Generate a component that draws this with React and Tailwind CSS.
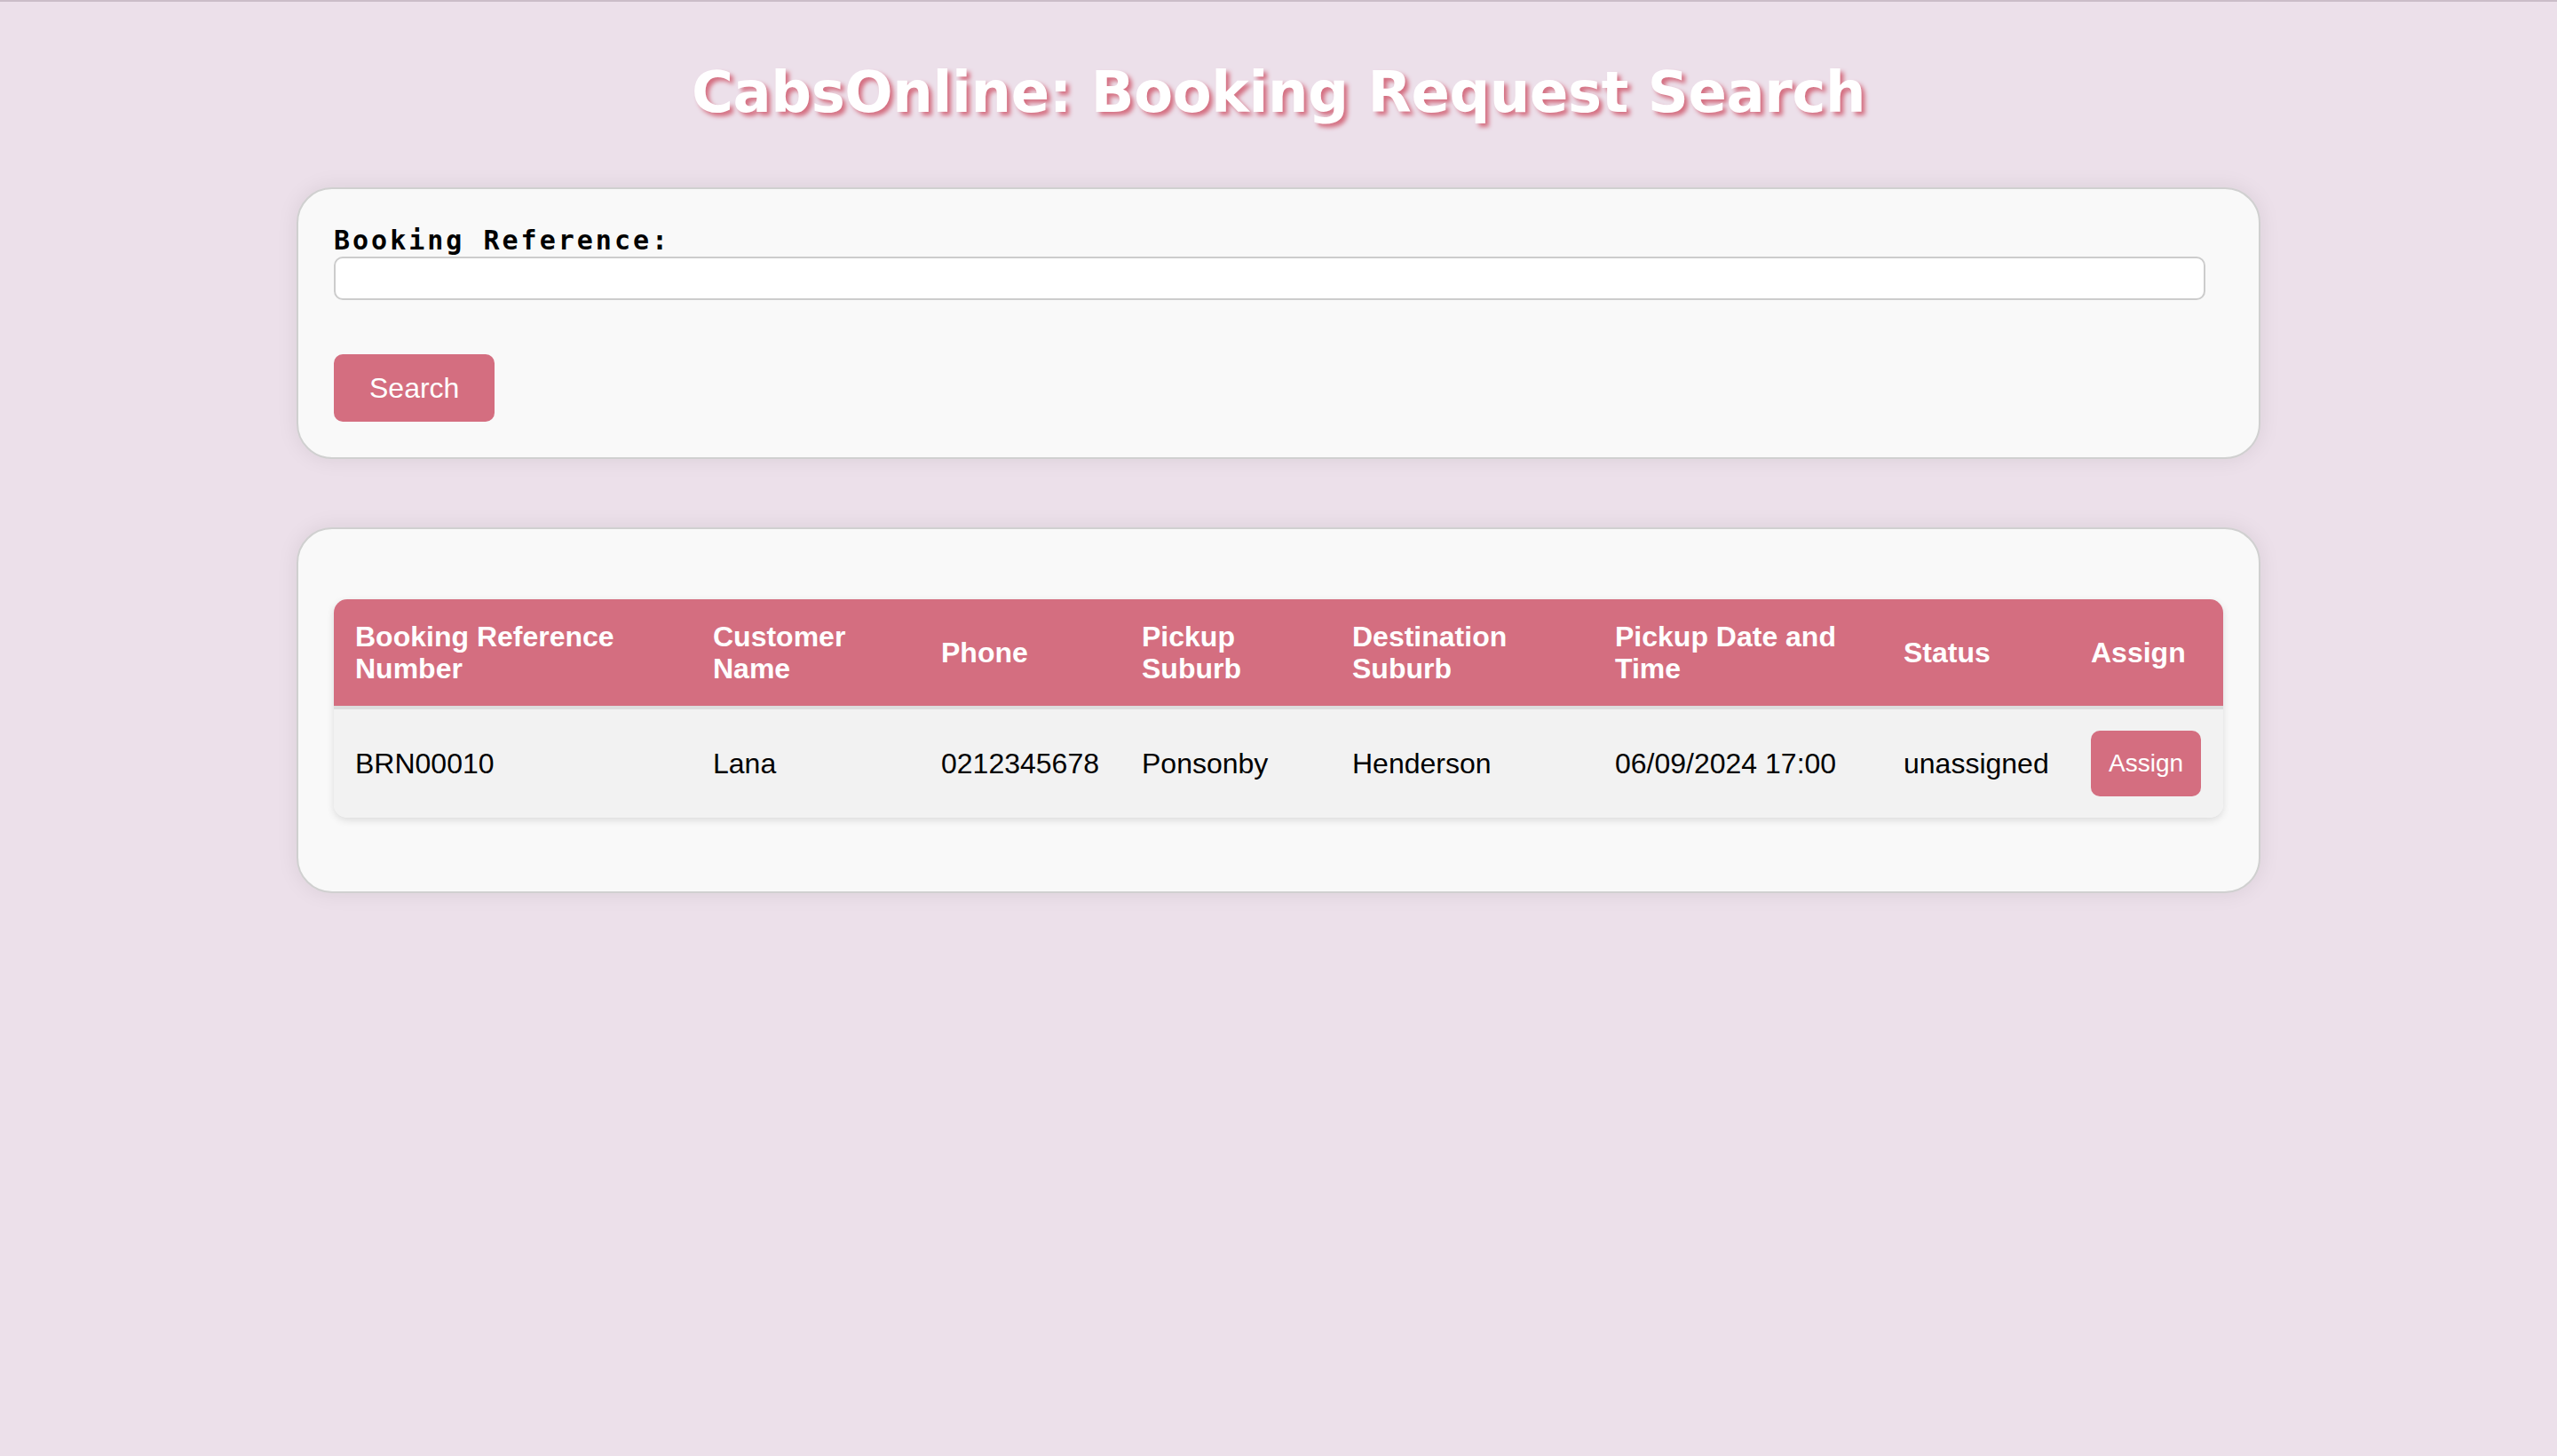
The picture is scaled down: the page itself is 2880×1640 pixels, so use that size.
export default function App() {
  const cols = [
    { w: "w-[403px]", label: "Booking Reference Number" },
    { w: "w-[257px]", label: "Customer Name" },
    { w: "w-[226px]", label: "Phone" },
    { w: "w-[237px]", label: "Pickup Suburb" },
    { w: "w-[296px]", label: "Destination Suburb" },
    { w: "w-[325px]", label: "Pickup Date and Time" },
    { w: "w-[211px]", label: "Status" },
    { w: "w-[173px]", label: "Assign" },
  ];
  const row = ["BRN00010", "Lana", "0212345678", "Ponsonby", "Henderson", "06/09/2024 17:00", "unassigned"];
  return (
    <div className="min-h-[1640px] w-full bg-[#ece0ea] border-t-2 border-[#cbbdc8] pt-[64px] font-['Liberation_Sans',Arial,sans-serif]">
      <h1 className="text-center text-white font-bold text-[64px] leading-[77px] tracking-[-0.4px] font-['DejaVu_Sans',Verdana,sans-serif] [text-shadow:4px_4px_5px_#d46e80]">
        CabsOnline: Booking Request Search
      </h1>

      <div className="w-[2212px] mx-auto mt-[68px] bg-[#f9f9f9] border-2 border-[#d0d0d0] rounded-[40px] shadow-[0_0_24px_rgba(0,0,0,0.08)] pt-[43px] pb-[40px] px-[40px]">
        <label className="block text-[30px] leading-[30px] font-bold tracking-[3px] text-black font-['DejaVu_Sans_Mono',Menlo,monospace]">
          Booking Reference:
        </label>
        <input
          type="text"
          className="block mt-[3px] w-[2108px] h-[49px] bg-white border-2 border-[#cccccc] rounded-[10px] outline-none"
        />
        <button className="mt-[61px] bg-[#d46e80] text-white text-[32px] leading-[36px] px-[40px] py-[20px] rounded-[10px]">
          Search
        </button>
      </div>

      <div className="w-[2212px] mx-auto mt-[77px] bg-[#f9f9f9] border-2 border-[#d0d0d0] rounded-[40px] shadow-[0_0_24px_rgba(0,0,0,0.08)] p-[40px]">
        <div className="mt-[39px] mb-[43px] rounded-[15px] overflow-hidden shadow-[0_3px_8px_rgba(0,0,0,0.12)]">
          <table className="w-full table-fixed border-collapse">
            <colgroup>
              {cols.map((c, i) => (
                <col key={i} className={c.w} />
              ))}
            </colgroup>
            <thead>
              <tr className="bg-[#d46e80] border-b-4 border-[#dddddd]">
                {cols.map((c, i) => (
                  <th
                    key={i}
                    className="text-left align-middle text-white font-bold text-[32px] leading-[36px] p-[24px] h-[120px]"
                  >
                    {c.label}
                  </th>
                ))}
              </tr>
            </thead>
            <tbody>
              <tr className="bg-[#f2f2f2]">
                {row.map((v, i) => (
                  <td key={i} className="text-left align-middle text-black text-[32px] leading-[37px] p-[24px] whitespace-nowrap">
                    {v}
                  </td>
                ))}
                <td className="p-[24px] align-middle">
                  <button className="bg-[#d46e80] text-white text-[28px] leading-[32px] px-[20px] py-[21px] rounded-[10px]">
                    Assign
                  </button>
                </td>
              </tr>
            </tbody>
          </table>
        </div>
      </div>
    </div>
  );
}
